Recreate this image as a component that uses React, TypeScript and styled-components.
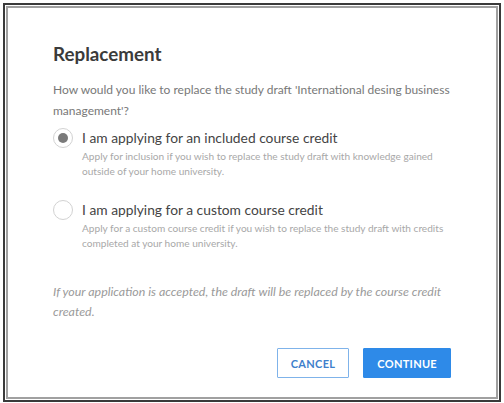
import React from "react";
import styled, { createGlobalStyle } from "styled-components";

const Global = createGlobalStyle`
  html, body { margin: 0; padding: 0; background: #fff; }
  body { font-family: Lato, "Open Sans", sans-serif; }
  * { box-sizing: border-box; }
`;

const Frame = styled.div`
  margin: 3px;
  width: 498px;
  height: 399px;
  border: 2px solid #3a3a3a;
  padding: 1px;
`;

const Dialog = styled.div`
  height: 100%;
  border: 2px solid #a0a0a0;
  padding: 33px 45px 0 45px;
  display: flex;
  flex-direction: column;
`;

const Title = styled.h2`
  margin: 0;
  font-size: 18.8px;
  line-height: 26px;
  font-weight: 700;
  color: #3b3b3b;
`;

const Question = styled.p`
  margin: 11.5px 0 0 0;
  font-size: 12px;
  line-height: 21px;
  color: #787878;
`;

const Options = styled.div`
  display: flex;
  flex-direction: column;
  gap: 20px;
  margin-top: 6.5px;
`;

const Option = styled.label`
  display: grid;
  grid-template-columns: 20px 1fr;
  column-gap: 9px;
  align-items: start;
`;

const Radio = styled.span<{ $checked?: boolean }>`
  width: 20px;
  height: 20px;
  border-radius: 50%;
  border: 1.5px solid #d2d2d2;
  display: flex;
  align-items: center;
  justify-content: center;
  margin-top: 1px;
  &::after {
    content: "";
    width: 10px;
    height: 10px;
    border-radius: 50%;
    background: ${(p) => (p.$checked ? "#7a7a7a" : "transparent")};
  }
`;

const OptionText = styled.div`
  display: flex;
  flex-direction: column;
`;

const OptionLabel = styled.span`
  font-size: 13.8px;
  line-height: 22px;
  color: #444;
`;

const OptionDesc = styled.span`
  font-size: 10.1px;
  line-height: 15px;
  color: #a8a8a8;
`;

const Note = styled.p`
  margin: 31px 0 0 0;
  font-size: 12.4px;
  line-height: 20px;
  font-style: italic;
  color: #9a9a9a;
`;

const Actions = styled.div`
  display: flex;
  justify-content: flex-end;
  gap: 14px;
  margin-top: 26px;
`;

const Button = styled.button<{ $primary?: boolean }>`
  height: 30px;
  padding: 0 13px;
  font-family: Lato, sans-serif;
  font-size: 11px;
  font-weight: 700;
  letter-spacing: 0.3px;
  text-transform: uppercase;
  border-radius: 1px;
  cursor: pointer;
  border: 1px solid ${(p) => (p.$primary ? "#2e8ae8" : "#7fb3ea")};
  background: ${(p) => (p.$primary ? "#2e8ae8" : "#fff")};
  color: ${(p) => (p.$primary ? "#fff" : "#3e7fcc")};
`;

export default function App() {
  return (
    <>
      <Global />
      <Frame>
        <Dialog>
          <Title>Replacement</Title>
          <Question>
            How would you like to replace the study draft 'International desing business management'?
          </Question>
          <Options>
            <Option>
              <Radio $checked />
              <OptionText>
                <OptionLabel>I am applying for an included course credit</OptionLabel>
                <OptionDesc>
                  Apply for inclusion if you wish to replace the study draft with knowledge gained outside of your home university.
                </OptionDesc>
              </OptionText>
            </Option>
            <Option>
              <Radio />
              <OptionText>
                <OptionLabel>I am applying for a custom course credit</OptionLabel>
                <OptionDesc>
                  Apply for a custom course credit if you wish to replace the study draft with credits completed at your home university.
                </OptionDesc>
              </OptionText>
            </Option>
          </Options>
          <Note>
            If your application is accepted, the draft will be replaced by the course credit created.
          </Note>
          <Actions>
            <Button>Cancel</Button>
            <Button $primary>Continue</Button>
          </Actions>
        </Dialog>
      </Frame>
    </>
  );
}
